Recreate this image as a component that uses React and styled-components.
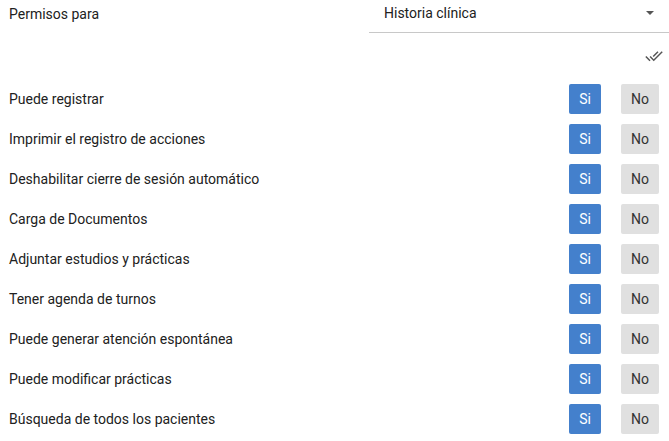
import styled, { createGlobalStyle } from "styled-components";

const GlobalStyle = createGlobalStyle`
  html, body {
    margin: 0;
    padding: 0;
    background: #ffffff;
  }
  body {
    font-family: Roboto, "Liberation Sans", sans-serif;
    color: #212121;
  }
`;

const Page = styled.div`
  width: 669px;
  display: flex;
  flex-direction: column;
`;

const Header = styled.div`
  display: flex;
  align-items: center;
  height: 33px;
`;

const HeaderLabel = styled.div`
  width: 369px;
  padding-left: 9px;
  box-sizing: border-box;
  font-size: 14px;
  color: #212121;
  margin-top: -6px;
`;

const Select = styled.div`
  flex: 1;
  height: 33px;
  box-sizing: border-box;
  border-bottom: 1px solid #c8c8c8;
  display: flex;
  align-items: center;
  justify-content: space-between;
  padding: 0 15px 6px 15px;
  font-size: 14px;
  color: #212121;
`;

const Caret = styled.span`
  width: 0;
  height: 0;
  border-left: 4px solid transparent;
  border-right: 4px solid transparent;
  border-top: 4px solid #555;
  margin-right: 0;
`;

const IconRow = styled.div`
  height: 46px;
  display: flex;
  justify-content: flex-end;
  align-items: center;
  padding-right: 6px;
`;

const Row = styled.div`
  height: 40px;
  display: flex;
  align-items: center;
  padding: 0 10px 0 9px;
`;

const Label = styled.div`
  flex: 1;
  font-size: 14px;
  color: #212121;
`;

const Toggle = styled.button`
  height: 30px;
  width: ${(p) => (p.$active ? "32px" : "38px")};
  margin-left: ${(p) => (p.$active ? "0" : "20px")};
  border: none;
  border-radius: 2px;
  padding: 0;
  font-family: Roboto, "Liberation Sans", sans-serif;
  font-size: 14px;
  background: ${(p) => (p.$active ? "#4480cc" : "#e0e0e0")};
  color: ${(p) => (p.$active ? "#ffffff" : "#333333")};
`;

const permisos = [
  "Puede registrar",
  "Imprimir el registro de acciones",
  "Deshabilitar cierre de sesión automático",
  "Carga de Documentos",
  "Adjuntar estudios y prácticas",
  "Tener agenda de turnos",
  "Puede generar atención espontánea",
  "Puede modificar prácticas",
  "Búsqueda de todos los pacientes",
];

const DoneAll = () => (
  <svg width="18" height="18" viewBox="0 0 24 24" fill="#555">
    <path d="M18 7l-1.41-1.41-6.34 6.34 1.41 1.41L18 7zm4.24-1.41L11.66 16.17 7.48 12l-1.41 1.41L11.66 19l12-12-1.42-1.41zM.41 13.41L6 19l1.41-1.41L1.83 12 .41 13.41z" />
  </svg>
);

const App = () => {
  return (
    <Page>
      <GlobalStyle />
      <Header>
        <HeaderLabel>Permisos para</HeaderLabel>
        <Select>
          <span>Historia clínica</span>
          <Caret />
        </Select>
      </Header>
      <IconRow>
        <DoneAll />
      </IconRow>
      {permisos.map((p) => (
        <Row key={p}>
          <Label>{p}</Label>
          <Toggle $active>Si</Toggle>
          <Toggle>No</Toggle>
        </Row>
      ))}
    </Page>
  );
};

export default App;
